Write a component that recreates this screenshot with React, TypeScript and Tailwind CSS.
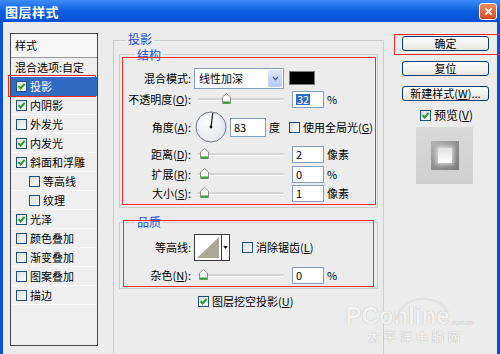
import clsx from "clsx";

const listItems = [
  { label: "内阴影", checked: true },
  { label: "外发光", checked: false },
  { label: "内发光", checked: true },
  { label: "斜面和浮雕", checked: true },
  { label: "等高线", checked: false, indent: true },
  { label: "纹理", checked: false, indent: true },
  { label: "光泽", checked: true },
  { label: "颜色叠加", checked: false },
  { label: "渐变叠加", checked: false },
  { label: "图案叠加", checked: false },
  { label: "描边", checked: false },
];

function Check({ checked, className }: { checked?: boolean; className?: string }) {
  return (
    <span
      className={clsx(
        "inline-flex h-[11px] w-[11px] shrink-0 items-center justify-center border border-[#1c5180] bg-gradient-to-br from-[#dcdcd7] to-white",
        className
      )}
    >
      {checked && (
        <svg viewBox="0 0 9 9" className="h-[9px] w-[9px]">
          <path d="M1.5 4.2 L3.6 6.5 L7.6 1.8" stroke="#21a121" strokeWidth="2" fill="none" />
        </svg>
      )}
    </span>
  );
}

function Slider({ width, thumb }: { width: number; thumb: number }) {
  return (
    <div className="relative h-[12px]" style={{ width }}>
      <div className="absolute left-0 right-0 top-[5px] h-[3px] rounded-sm border-b border-white bg-[#d4d4d4]" />
      <svg
        viewBox="0 0 9 11"
        className="absolute top-0 h-[11px] w-[9px]"
        style={{ left: thumb }}
      >
        <path d="M0.5 4 L4.5 0.5 L8.5 4 V10.5 H0.5 Z" fill="#f7f7f4" stroke="#8c8c8c" />
        <rect x="1" y="8.5" width="7" height="2" fill="#2fa43a" />
      </svg>
    </div>
  );
}

function Field({ value, w = 32, h = 17, selected }: { value: string; w?: number; h?: number; selected?: boolean }) {
  return (
    <div
      className="flex items-center border border-[#7f9db9] bg-white pl-[3px] text-[11px] leading-none"
      style={{ width: w, height: h }}
    >
      <span className={selected ? "bg-[#316ac5] px-[1px] text-white" : "text-black"}>{value}</span>
    </div>
  );
}

function Label({ children }: { children: React.ReactNode }) {
  return <div className="w-[71px] shrink-0 text-right">{children}</div>;
}

function Button({ children }: { children: React.ReactNode }) {
  return (
    <div className="flex h-[15px] w-[87px] items-center justify-center rounded-[3px] border border-[#003c74] bg-gradient-to-b from-white to-[#e6e5de] text-[11px] leading-none">
      {children}
    </div>
  );
}

function Legend({ children, className }: { children: React.ReactNode; className?: string }) {
  return (
    <span
      className={clsx(
        "absolute h-[12px] bg-[#ececec] px-[2px] text-[12px] leading-[12px] text-[#1f4fd8]",
        className
      )}
    >
      {children}
    </span>
  );
}

export default function App() {
  return (
    <div className="relative flex h-[354px] w-[500px] flex-col overflow-hidden bg-[#ececec] font-['Noto_Sans_CJK_SC',sans-serif] text-[11px] leading-none text-black">
      <div className="flex h-[22px] shrink-0 items-center justify-between bg-gradient-to-b from-[#3d8cf6] via-[#0b5fe2] to-[#0550d4] pl-[5px] pr-[3px]">
        <span className="text-[13px] font-bold tracking-[0.5px] text-white">图层样式</span>
        <div className="flex h-[17px] w-[18px] items-center justify-center rounded-[3px] border border-white bg-gradient-to-b from-[#f08a5a] to-[#d8441c]">
          <svg viewBox="0 0 10 10" className="h-[9px] w-[9px]">
            <path d="M1.5 1.5 L8.5 8.5 M8.5 1.5 L1.5 8.5" stroke="white" strokeWidth="2" />
          </svg>
        </div>
      </div>

      <div className="flex flex-1 border-x-[3px] border-[#0a4fd4] pl-[7px]">
        {/* style list */}
        <div className="mt-[11px] w-[88px] shrink-0 self-start border border-[#454545] bg-[#efefef] pb-[40px]">
          <div className="flex h-[24px] items-center border-b border-[#9a9a9a] bg-[#f6f6f6] pl-[4px]">样式</div>
          <div className="flex h-[19px] items-center border-b border-[#fafafa] pl-[4px]">混合选项:自定</div>
          <div className="relative flex h-[19px] items-center gap-[3px] bg-[#316ac5] pl-[5px] text-white">
            <Check checked />
            <span>投影</span>
            <div className="absolute -bottom-[1px] -left-[3px] -top-[2px] right-[1px] border border-[#ff2020]" />
          </div>
          {listItems.map((item) => (
            <div
              key={item.label}
              className={clsx(
                "flex h-[19px] items-center gap-[3px] border-b border-[#fafafa]",
                item.indent ? "pl-[18px]" : "pl-[5px]"
              )}
            >
              <Check checked={item.checked} />
              <span>{item.label}</span>
            </div>
          ))}
        </div>

        {/* main panel */}
        <div className="relative ml-[15px] mt-[18px] h-[400px] w-[271px] shrink-0 border border-[#cdcdcd] px-[5px] pt-[13px]">
          <Legend className="-top-[8px] left-[12px]">投影</Legend>

          {/* 结构 */}
          <div className="relative h-[154px] border border-[#cdcdcd]">
            <Legend className="-top-[6px] left-[15px]">结构</Legend>
            <div className="absolute bottom-[2px] left-[2px] right-[1px] top-[2px] border border-[#ff2a2a]" />

            <div className="mt-[12px] flex h-[22px] items-center">
              <Label>混合模式:</Label>
              <div className="ml-[3px] flex h-[21px] w-[90px] items-center border border-[#7f9db9] bg-white">
                <span className="flex-1 pl-[4px]">线性加深</span>
                <div className="mr-[1px] flex h-[17px] w-[14px] items-center justify-center rounded-[2px] bg-gradient-to-b from-[#dfe8fd] to-[#b4c8f6]">
                  <svg viewBox="0 0 8 6" className="h-[5px] w-[7px]">
                    <path d="M1 1 L4 4.5 L7 1" stroke="#4d6185" strokeWidth="1.6" fill="none" />
                  </svg>
                </div>
              </div>
              <div className="ml-[5px] h-[14px] w-[26px] border border-[#7a7a7a] bg-black" />
            </div>

            <div className="mt-[1px] flex h-[18px] items-center">
              <Label>
                不透明度(<u>O</u>):
              </Label>
              <div className="ml-[7px]">
                <Slider width={86} thumb={24} />
              </div>
              <div className="ml-[8px]">
                <Field value="32" selected />
              </div>
              <span className="ml-[3px]">%</span>
            </div>

            <div className="mt-[3px] flex h-[32px] items-center">
              <Label>
                角度(<u>A</u>):
              </Label>
              <svg viewBox="0 0 32 32" className="ml-[4px] h-[32px] w-[32px]">
                <defs>
                  <radialGradient id="dial" cx="40%" cy="35%" r="70%">
                    <stop offset="0" stopColor="#ffffff" />
                    <stop offset="1" stopColor="#e2e4ea" />
                  </radialGradient>
                </defs>
                <circle cx="16" cy="16" r="15" fill="url(#dial)" stroke="#6f7784" strokeWidth="1" />
                <line x1="16" y1="16" x2="17.8" y2="2" stroke="#111" strokeWidth="1.2" />
                <circle cx="16" cy="16" r="1.4" fill="#111" />
              </svg>
              <div className="ml-[3px]">
                <Field value="83" w={36} h={19} />
              </div>
              <span className="ml-[3px]">度</span>
              <Check className="ml-[9px]" />
              <span className="ml-[3px]">
                使用全局光(<u>G</u>)
              </span>
            </div>

            {[
              { label: "距离", key: "D", value: "2", unit: "像素", mt: "mt-[2px]" },
              { label: "扩展", key: "R", value: "0", unit: "%", mt: "mt-[2px]" },
              { label: "大小", key: "S", value: "1", unit: "像素", mt: "mt-[1px]" },
            ].map((r) => (
              <div key={r.label} className={clsx("flex h-[18px] items-center", r.mt)}>
                <Label>
                  {r.label}(<u>{r.key}</u>):
                </Label>
                <div className="ml-[6px]">
                  <Slider width={87} thumb={3} />
                </div>
                <div className="ml-[8px]">
                  <Field value={r.value} />
                </div>
                <span className="ml-[3px]">{r.unit}</span>
              </div>
            ))}
          </div>

          {/* 品质 */}
          <div className="relative mt-[14px] h-[67px] border border-[#cdcdcd]">
            <Legend className="-top-[7px] left-[15px]">品质</Legend>
            <div className="absolute -top-[3px] bottom-[1px] left-[3px] right-[3px] border border-[#ff2a2a]" />

            <div className="mt-[11px] flex h-[27px] items-center">
              <Label>等高线:</Label>
              <div className="ml-[3px] flex h-[27px] w-[36px] border border-[#3a3a3a] bg-white">
                <svg viewBox="0 0 26 25" preserveAspectRatio="none" className="h-full w-[26px]">
                  <path d="M2 23 L24 2 V23 Z" fill="#aca899" />
                </svg>
                <div className="flex flex-1 items-center justify-center border-l border-[#3a3a3a]">
                  <svg viewBox="0 0 6 4" className="h-[3px] w-[5px]">
                    <path d="M0 0 H6 L3 4 Z" fill="#000" />
                  </svg>
                </div>
              </div>
              <Check className="ml-[12px]" />
              <span className="ml-[3px]">
                消除锯齿(<u>L</u>)
              </span>
            </div>

            <div className="mt-[5px] flex h-[18px] items-center">
              <Label>
                杂色(<u>N</u>):
              </Label>
              <div className="ml-[6px]">
                <Slider width={87} thumb={2} />
              </div>
              <div className="ml-[8px]">
                <Field value="0" />
              </div>
              <span className="ml-[3px]">%</span>
            </div>
          </div>

          <div className="mt-[7px] flex items-center gap-[3px] pl-[79px]">
            <Check checked />
            <span>
              图层挖空投影(<u>U</u>)
            </span>
          </div>
        </div>

        {/* buttons */}
        <div className="ml-[18px] mt-[14px] flex w-[87px] shrink-0 flex-col">
          <div className="relative">
            <Button>确定</Button>
            <div className="absolute -left-[8px] -right-[12px] -top-[2px] -bottom-[4px] border border-[#ff2a2a]" />
          </div>
          <div className="mt-[10px]">
            <Button>复位</Button>
          </div>
          <div className="mt-[10px]">
            <Button>
              新建样式(<u>W</u>)...
            </Button>
          </div>
          <div className="ml-[18px] mt-[8px] flex items-center gap-[3px]">
            <Check checked />
            <span className="text-[12px]">
              预览(<u>V</u>)
            </span>
          </div>
          <div className="ml-[14px] mt-[6px] flex h-[57px] w-[57px] items-center justify-center bg-gradient-to-b from-[#d9d9d9] to-[#cfcfcf]">
            <div className="flex h-[29px] w-[28px] items-center justify-center bg-gradient-to-br from-[#b5b5b5] via-[#8e8e8e] to-[#7a7a7a]">
              <div className="h-[15px] w-[14px] bg-gradient-to-b from-[#e0e0e0] to-white shadow-[0_0_4px_2px_rgba(255,255,255,0.6)]" />
            </div>
          </div>
        </div>
      </div>

      {/* watermark */}
      <div className="pointer-events-none absolute bottom-[11px] right-[26px] flex flex-col items-end">
        <svg viewBox="0 0 60 30" className="absolute -top-[12px] right-[22px] h-[30px] w-[60px]">
          <path d="M4 28 A28 26 0 0 1 56 20" stroke="#e2e2e2" strokeWidth="2.5" fill="none" />
        </svg>
        <div className="flex items-end">
          <span className="font-['Liberation_Sans',sans-serif] text-[24px] font-bold leading-none text-[#f1f1f1] [text-shadow:0_0_1px_#a9a9a9]">
            PConline
          </span>
          <span className="mb-[2px] font-['Liberation_Sans',sans-serif] text-[7px] leading-none text-[#cfcfcf]">.com.cn</span>
        </div>
        <span className="mr-[10px] mt-[3px] text-[12px] font-bold leading-none tracking-[4px] text-[#f1f1f1] [text-shadow:0_0_1px_#a9a9a9]">
          太平洋电脑网
        </span>
      </div>
    </div>
  );
}
